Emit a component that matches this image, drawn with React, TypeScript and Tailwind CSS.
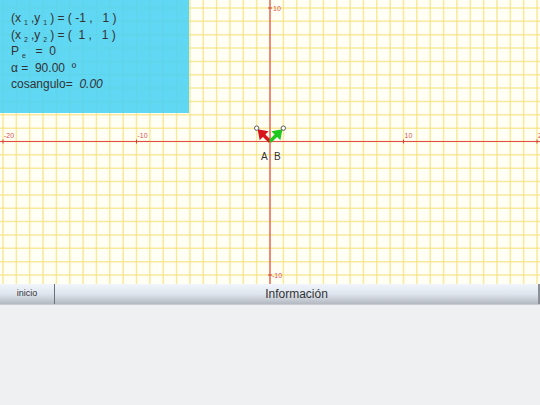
import React from "react";

const O = { x: 270, y: 141.5 };
const U = 13.35;

const Grid = () => {
  const vx: number[] = [];
  for (let k = -21; k <= 21; k++) vx.push(O.x + k * U);
  const hy: number[] = [];
  for (let k = -11; k <= 11; k++) hy.push(O.y + k * U);
  const A = { x: O.x - U, y: O.y - U };
  const B = { x: O.x + U, y: O.y - U };
  return (
    <svg width="540" height="284" className="block">
      <rect width="540" height="284" fill="#fffff6" />
      {vx.map((x, i) => (
        <line key={"v" + i} x1={x} y1={0} x2={x} y2={284} stroke="#f7e27e" strokeWidth={1.5} opacity={0.75} />
      ))}
      {hy.map((y, i) => (
        <line key={"h" + i} x1={0} y1={y} x2={540} y2={y} stroke="#f7e27e" strokeWidth={1.5} opacity={0.75} />
      ))}
      <line x1={0} y1={O.y} x2={540} y2={O.y} stroke="#e44a4a" strokeWidth={1.2} />
      <line x1={O.x} y1={0} x2={O.x} y2={284} stroke="#e44a4a" strokeWidth={1.2} />
      {[-20, -10, 10, 20].map((n) => (
        <g key={"x" + n}>
          <line x1={O.x + n * U} y1={O.y - 2} x2={O.x + n * U} y2={O.y + 2} stroke="#d04040" strokeWidth={1} />
          <text x={O.x + n * U + 1} y={O.y - 4} fontSize="7" fill="#e05050" fontFamily="Liberation Sans, sans-serif">
            {n}
          </text>
        </g>
      ))}
      {[10, -10].map((n) => (
        <g key={"y" + n}>
          <line x1={O.x - 2} y1={O.y - n * U} x2={O.x + 2} y2={O.y - n * U} stroke="#d04040" strokeWidth={1} />
          <text x={O.x + (n < 0 ? 2 : 3)} y={O.y - n * U + 2.5} fontSize="7" fill="#e05050" fontFamily="Liberation Sans, sans-serif">
            {n}
          </text>
        </g>
      ))}
      <line x1={O.x} y1={O.y} x2={A.x + 5} y2={A.y + 5} stroke="#d8141c" strokeWidth={3.5} />
      <polygon points={`${A.x + 1},${A.y + 1} ${A.x + 12},${A.y + 3} ${A.x + 3},${A.y + 12}`} fill="#d8141c" />
      <line x1={O.x} y1={O.y} x2={B.x - 5} y2={B.y + 5} stroke="#1ec81e" strokeWidth={3.5} />
      <polygon points={`${B.x - 1},${B.y + 1} ${B.x - 12},${B.y + 3} ${B.x - 3},${B.y + 12}`} fill="#1ec81e" />
      <circle cx={A.x} cy={A.y} r={2.2} fill="#fff" stroke="#333" strokeWidth={0.8} />
      <circle cx={B.x} cy={B.y} r={2.2} fill="#fff" stroke="#333" strokeWidth={0.8} />
      <text x={261} y={160} fontSize="10" fill="#333" fontFamily="Liberation Sans, sans-serif">A</text>
      <text x={274} y={160} fontSize="10" fill="#333" fontFamily="Liberation Sans, sans-serif">B</text>
    </svg>
  );
};

const Sub = ({ children }: { children: React.ReactNode }) => (
  <span className="text-[7px] leading-[0] relative top-[3px] mx-[3px]">{children}</span>
);

export default function App() {
  return (
    <div className="w-[540px] h-[405px] bg-[#eff0f2] flex flex-col overflow-hidden font-['Liberation_Sans',sans-serif]">
      <div className="relative h-[284px]">
        <Grid />
        <div className="absolute left-0 top-0 w-[189px] h-[113px] bg-[#4fd3f3]/90 pl-[11px] pt-[10px] text-[12px] text-[#333] leading-[16.5px]">
          <div>
            (x<Sub>1</Sub>,y<Sub>1</Sub>) = ( -1 , &nbsp;&nbsp;1 )
          </div>
          <div>
            (x<Sub>2</Sub>,y<Sub>2</Sub>) = ( &nbsp;1 , &nbsp;&nbsp;1 )
          </div>
          <div>
            P<Sub>e</Sub> &nbsp;= &nbsp;0
          </div>
          <div>
            α = &nbsp;90.00 &nbsp;º
          </div>
          <div>
            cosangulo= &nbsp;<span className="italic">0.00</span>
          </div>
        </div>
      </div>
      <div className="h-[21px] flex bg-gradient-to-b from-[#f1f6fc] via-[#dfe5ee] to-[#b4b9c1] border-b border-[#c8ccd2]">
        <div className="w-[55px] flex items-center justify-center text-[9px] text-[#333] border-r border-[#6d7178]">
          inicio
        </div>
        <div className="flex-1 flex items-center justify-center text-[12px] text-[#333] border-r-2 border-[#8c9097]">
          Información
        </div>
      </div>
      <div className="flex-1" />
    </div>
  );
}
